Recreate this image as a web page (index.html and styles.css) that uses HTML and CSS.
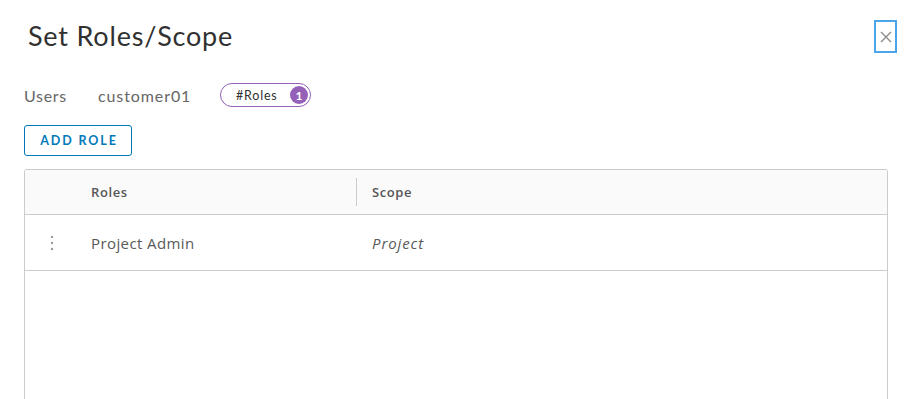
FILE: index.html
```html
<!DOCTYPE html>
<html>
<head>
<meta charset="utf-8">
<link rel="stylesheet" href="styles.css">
</head>
<body>
<div class="modal">
  <div class="modal-header">
    <h3 class="modal-title">Set Roles/Scope</h3>
    <button class="close" aria-label="Close">
      <svg width="12" height="12" viewBox="0 0 12 12"><path d="M1 1 L11 11 M11 1 L1 11" stroke="#8c8c8c" stroke-width="1.4" fill="none"/></svg>
    </button>
  </div>
  <div class="info">
    <span class="label">Users</span>
    <span class="value">customer01</span>
    <span class="badge-pill">#Roles <span class="count">1</span></span>
  </div>
  <button class="btn-add">ADD ROLE</button>
  <div class="grid">
    <div class="grid-head">
      <div class="cell-action"></div>
      <div class="cell-role">Roles</div>
      <div class="sep"></div>
      <div class="cell-scope">Scope</div>
    </div>
    <div class="grid-row">
      <div class="cell-action">
        <svg width="4" height="16" viewBox="0 0 4 16"><circle cx="2" cy="2" r="1.2" fill="#9a9a9a"/><circle cx="2" cy="8" r="1.2" fill="#9a9a9a"/><circle cx="2" cy="14" r="1.2" fill="#9a9a9a"/></svg>
      </div>
      <div class="cell-role">Project Admin</div>
      <div class="cell-scope italic">Project</div>
    </div>
    <div class="grid-body"></div>
  </div>
</div>
</body>
</html>
```
FILE: styles.css
```css
* { box-sizing: border-box; }
html, body { margin: 0; padding: 0; background: #fff; }
body { font-family: "Lato", "Liberation Sans", sans-serif; color: #565656; overflow: hidden; }
.modal { padding: 0 24px 0 24px; height: 399px; display: flex; flex-direction: column; }
.modal-header { display: flex; align-items: flex-start; justify-content: space-between; padding-top: 20px; }
.modal-title { margin: 0 0 0 4px; font-weight: 400; font-size: 27px; line-height: 32px; color: #313131; letter-spacing: 0.8px; }
.close { width: 23px; height: 33px; border: 2px solid #4ba5e8; background: #fff; padding: 0; display: flex; align-items: center; justify-content: center; margin-right: -9px; }
.info { display: flex; align-items: center; margin-top: 30px; height: 24px; font-size: 16px; color: #666; }
.label { width: 74px; letter-spacing: 0.7px; }
.value { width: 122px; letter-spacing: 0.9px; }
.badge-pill { display: inline-flex; align-items: center; height: 24px; width: 91px; border: 1.5px solid #9460b8; border-radius: 12px; padding: 0 2px 0 15px; font-size: 12.5px; font-weight: 400; letter-spacing: 0.8px; color: #313131; }
.count { display: inline-flex; align-items: center; justify-content: center; width: 18px; height: 18px; border-radius: 50%; background: #9460b8; color: #fff; font-weight: 700; font-size: 12px; letter-spacing: 0; margin-left: auto; }
.btn-add { align-self: flex-start; margin-top: 18px; height: 31px; width: 108px; border: 1.5px solid #0079b8; border-radius: 3px; background: #fff; color: #0079b8; font-family: "Lato", sans-serif; font-weight: 700; font-size: 12.5px; letter-spacing: 1.9px; padding: 0 0 0 2px; }
.grid { margin-top: 13px; flex: 1; border: 1px solid #ccc; border-bottom: none; border-radius: 3px 3px 0 0; display: flex; flex-direction: column; font-family: "Open Sans", sans-serif; }
.grid-head { display: flex; align-items: center; height: 45px; background: #fafafa; border-bottom: 1px solid #ccc; font-size: 13px; font-weight: 600; color: #565656; letter-spacing: 0.6px; }
.cell-action { width: 66px; display: flex; justify-content: flex-start; padding-left: 25px; }
.cell-role { width: 265px; }
.sep { width: 1px; height: 28px; background: #ccc; margin-right: 15px; }
.cell-scope { flex: 1; }
.grid-row { display: flex; align-items: center; height: 56px; border-bottom: 1px solid #ccc; font-size: 15px; color: #595959; letter-spacing: 0.4px; }
.grid-row .cell-role { width: 281px; }
.italic { font-style: italic; letter-spacing: 0.9px; }
.grid-body { flex: 1; }
```
